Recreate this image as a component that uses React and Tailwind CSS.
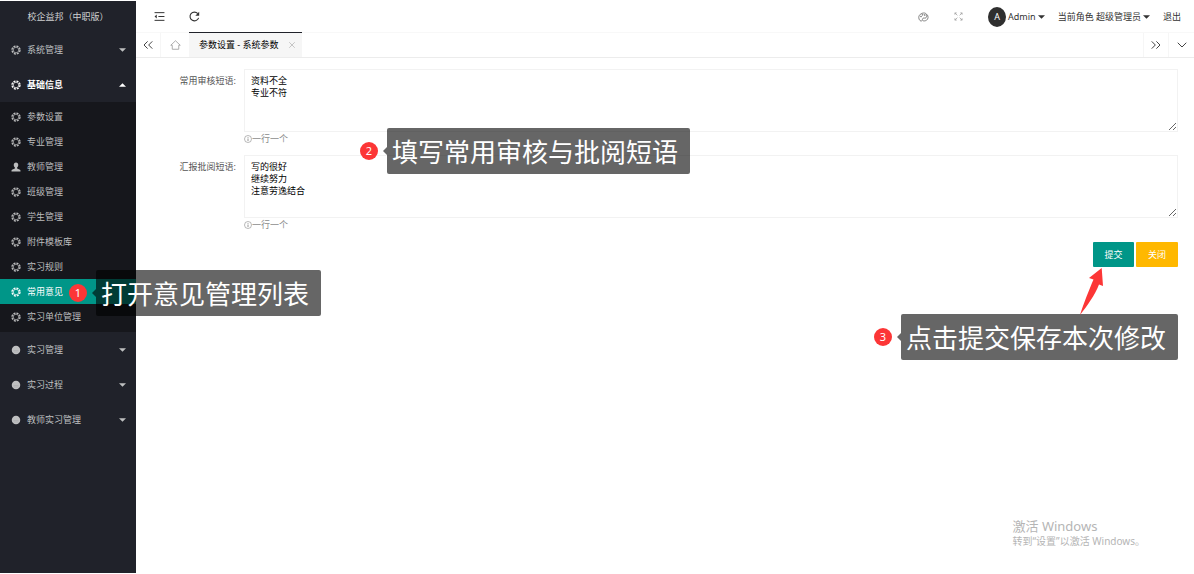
import { useState } from 'react'
import { ChevronDown, ChevronsLeft, ChevronsRight, X } from 'lucide-react'

const GearIcon = () => (
    <svg viewBox="0 0 20 20" className="w-[10px] h-[10px] shrink-0" fill="none" stroke="currentColor">
        <circle cx="10" cy="10" r="8" strokeWidth="2.6" strokeDasharray="4.2 2.08" />
        <circle cx="10" cy="10" r="5.6" strokeWidth="1.5" />
    </svg>
)

const UserIcon = () => (
    <svg viewBox="0 0 20 20" className="w-[10px] h-[10px] shrink-0" fill="currentColor">
        <path d="M10 1C7 1 5.500 3.200 5.500 6c0 2.200 1 4 2.300 5v2L2 15.500C1.200 16 1 17 1 19h18c0-2-.2-3-1-3.500L12.200 13v-2c1.300-1 2.300-2.800 2.300-5C14.500 3.200 13 1 10 1z" />
    </svg>
)

const DotIcon = () => (
    <svg viewBox="0 0 20 20" className="w-[10px] h-[10px] shrink-0">
        <circle cx="10" cy="10" r="8.5" fill="currentColor" />
        <path d="M5 11h10M5 14h10" stroke="#a5a6a8" strokeWidth="1" />
    </svg>
)

const Caret = ({ up }) => (
    <svg viewBox="0 0 8 4" className="w-[7px] h-[4px] shrink-0" fill="currentColor">
        <path d={up ? 'M0 4h8L4 0z' : 'M0 0h8L4 4z'} />
    </svg>
)

const MenuIcon = () => (
    <svg viewBox="0 0 20 20" className="w-[11px] h-[11px]" fill="none" stroke="currentColor" strokeWidth="1.8">
        <path d="M1 3h18M8 10h11M1 17h18" />
        <path d="M5 6.500v7L1 10z" fill="currentColor" stroke="none" />
    </svg>
)

const RefreshIcon = () => (
    <svg viewBox="0 0 20 20" className="w-[11px] h-[11px]" fill="none" stroke="currentColor" strokeWidth="2">
        <path d="M17.500 12.500A8 8 0 1 1 16 4.800" />
        <path d="M18.500 1.500v7h-7z" fill="currentColor" stroke="none" />
    </svg>
)

const HomeIcon = () => (
    <svg viewBox="0 0 22 20" className="w-[11px] h-[10px]" fill="none" stroke="currentColor" strokeWidth="1.6">
        <path d="M4.500 10.500H1.500L11 1.500l9.500 9h-3V18.500h-13z" />
    </svg>
)

const ThemeIcon = () => (
    <svg viewBox="0 0 22 20" className="w-[11px] h-[10px]" fill="none" stroke="currentColor" strokeWidth="1.6">
        <path d="M15 2.500C10 .5 1.500 4 1.500 11c0 5 4 8 6 7 2.500-1.200 0-4 2.500-5.500s4 1 6-1S18 4 15 2.500z" />
        <path d="M18 5c3 3 3 9-1 11.500-2.500 1.500-5 1.500-7 1" />
        <circle cx="6" cy="9" r="1" />
        <circle cx="9" cy="5.500" r="1" />
        <circle cx="13.500" cy="6" r="1" />
    </svg>
)

const FullscreenIcon = () => (
    <svg viewBox="0 0 20 20" className="w-[9px] h-[9px]" fill="none" stroke="currentColor" strokeWidth="1.6">
        <path d="M2 6V2h4M14 2h4v4M18 14v4h-4M6 18H2v-4M2 2l5.500 5.500M18 2l-5.500 5.500M2 18l5.500-5.500M18 18l-5.500-5.500" />
    </svg>
)

const HintIcon = () => (
    <svg viewBox="0 0 16 16" className="w-[8px] h-[8px] shrink-0" fill="none" stroke="currentColor" strokeWidth="1.2">
        <circle cx="8" cy="8" r="7" />
        <path d="M8 4v1.500M8 7v5" strokeWidth="1.8" />
    </svg>
)

const subMenu = [
    { name: '参数设置', icon: GearIcon },
    { name: '专业管理', icon: GearIcon },
    { name: '教师管理', icon: UserIcon },
    { name: '班级管理', icon: GearIcon },
    { name: '学生管理', icon: GearIcon },
    { name: '附件模板库', icon: GearIcon },
    { name: '实习规则', icon: GearIcon },
    { name: '常用意见', icon: GearIcon, active: true },
    { name: '实习单位管理', icon: GearIcon },
]

const NavGroup = ({ name, icon: Icon, open }) => (
    <button
        type="button"
        aria-expanded={Boolean(open)}
        className={`w-full h-[35px] pl-[11px] pr-[10px] flex items-center gap-[6px] ${open ? 'text-white font-bold' : 'text-[#bfc0c1]'}`}
    >
        <Icon />
        <span className="flex-1 text-left">{name}</span>
        <Caret up={open} />
    </button>
)

const Sidebar = () => (
    <nav className="w-[136px] shrink-0 bg-[#20222a]">
        <div className="h-[31px] flex items-center justify-center text-[#cfd0d1]">校企益邦（中职版）</div>
        <NavGroup name="系统管理" icon={GearIcon} />
        <NavGroup name="基础信息" icon={GearIcon} open />
        <ul className="h-[230px] py-[3px] flex flex-col bg-[#16171c]">
            {subMenu.map(({ name, icon: Icon, active }) => (
                <li key={name} className="flex-1 flex">
                    <a
                        href="#"
                        className={`flex-1 pl-[11px] flex items-center gap-[6px] ${active ? 'bg-[#009688] text-white' : 'text-[#bcbdbe]'}`}
                    >
                        <Icon />
                        {name}
                    </a>
                </li>
            ))}
        </ul>
        <NavGroup name="实习管理" icon={DotIcon} />
        <NavGroup name="实习过程" icon={DotIcon} />
        <NavGroup name="教师实习管理" icon={DotIcon} />
    </nav>
)

const Header = () => (
    <header className="h-[31px] pl-[6px] pr-[13px] flex items-center justify-between text-[#333]">
        <div className="flex">
            <button type="button" aria-label="侧边伸缩" className="w-[35px] flex justify-center"><MenuIcon /></button>
            <button type="button" aria-label="刷新" className="w-[35px] flex justify-center"><RefreshIcon /></button>
        </div>
        <div className="flex items-center">
            <button type="button" aria-label="主题" className="w-[35px] flex justify-center text-[#666]"><ThemeIcon /></button>
            <button type="button" aria-label="全屏" className="w-[35px] flex justify-center text-[#999]"><FullscreenIcon /></button>
            <button type="button" className="ml-3 flex items-center gap-[2px]">
                <span className="w-[18px] h-[20px] rounded-[50%] bg-[#2f2f2f] text-white flex items-center justify-center">A</span>
                <span>Admin</span>
                <Caret />
            </button>
            <button type="button" className="ml-[13px] flex items-center gap-[2px]">
                当前角色 超级管理员
                <Caret />
            </button>
            <a href="#" className="ml-[13px]">退出</a>
        </div>
    </header>
)

const TabBar = () => (
    <div className="h-[26px] flex border-y border-t-[#f8f8f8] border-b-[#ececec] text-[#444]">
        <button type="button" aria-label="向左" className="w-[25px] flex items-center justify-center border-r border-[#f6f6f6]">
            <ChevronsLeft size={16} strokeWidth={1.500} />
        </button>
        <button type="button" aria-label="首页" className="w-[28px] flex items-center justify-center text-[#999]">
            <HomeIcon />
        </button>
        <div className="-mt-px h-[25px] border-t border-[#20222a] bg-[#f6f6f6] pl-[10px] pr-[5px] flex items-center gap-[8px] text-black">
            <span>参数设置 - 系统参数</span>
            <button type="button" aria-label="关闭标签" className="text-[#bbb]"><X size={10} strokeWidth={2} /></button>
        </div>
        <div className="flex-1"></div>
        <button type="button" aria-label="向右" className="w-[25px] flex items-center justify-center border-l border-[#f6f6f6]">
            <ChevronsRight size={16} strokeWidth={1.500} />
        </button>
        <button type="button" aria-label="更多" className="w-[26px] flex items-center justify-center border-l border-[#f6f6f6]">
            <ChevronDown size={16} strokeWidth={1.500} />
        </button>
    </div>
)

const PhraseField = ({ id, label, value, onChange }) => (
    <div className="flex">
        <label htmlFor={id} className="w-[108px] pt-[6px] pr-[8px] text-right text-[#555]">{label}</label>
        <div className="flex-1">
            <textarea
                id={id}
                value={value}
                onChange={(e) => onChange(e.target.value)}
                className="block w-full h-[63px] px-[6px] py-[5px] border border-[#f2f2f2] text-black outline-none resize"
            />
            <p className="h-[13px] flex items-center text-[#8a8a8a]">
                <HintIcon />
                一行一个
            </p>
        </div>
    </div>
)

const Callout = ({ step, text, place }) => (
    <div className={`absolute flex items-center pointer-events-none ${place}`}>
        <span className="w-[18px] h-[18px] rounded-full bg-[#fc3636] text-white text-[11px] flex items-center justify-center">{step}</span>
        <svg viewBox="0 0 4 8" className="ml-[5px] w-[4px] h-[8px]" fill="#000" fillOpacity="0.6">
            <path d="M4 0v8L0 4z" />
        </svg>
        <span className="h-[46px] pl-[5px] pr-[12px] rounded-[2px] bg-black/60 text-white text-[26px] leading-[48px] whitespace-nowrap">{text}</span>
    </div>
)

const App = () => {
    const [audit, setAudit] = useState('资料不全\n专业不符')
    const [review, setReview] = useState('写的很好\n继续努力\n注意劳逸结合')

    return (
        <div className="relative min-h-screen py-px flex bg-white text-[9px] leading-[12px] font-['Noto_Sans','Noto_Sans_CJK_SC',sans-serif]">
            <Sidebar />
            <div className="flex-1 min-w-0">
                <Header />
                <TabBar />
                <form className="pt-[11px] pr-4" onSubmit={(e) => e.preventDefault()}>
                    <div className="flex flex-col gap-[10px]">
                        <PhraseField id="audit" label="常用审核短语:" value={audit} onChange={setAudit} />
                        <PhraseField id="review" label="汇报批阅短语:" value={review} onChange={setReview} />
                    </div>
                    <div className="mt-[11px] flex justify-end gap-[2px] text-white">
                        <button type="submit" className="w-[41px] h-[25px] rounded-[1px] bg-[#009688]">提交</button>
                        <button type="button" className="w-[42px] h-[25px] rounded-[1px] bg-[#ffb800]">关闭</button>
                    </div>
                </form>
            </div>

            {/* Step hints */}
            <Callout step={1} text="打开意见管理列表" place="left-[69px] top-[270px]" />
            <Callout step={2} text="填写常用审核与批阅短语" place="left-[360px] top-[128px]" />
            <Callout step={3} text="点击提交保存本次修改" place="right-4 top-[314px]" />
            <svg viewBox="0 0 24 48" className="absolute right-[90px] top-[268px] w-[24px] h-[48px] pointer-events-none" fill="#fc3636">
                <path d="M21.700 0L9 10l4.500 1.500C9 22 3.500 36 0 47c7-9 15-20 19-30.500l4 1.500z" />
            </svg>

            {/* Windows activation notice */}
            <div className="absolute right-[49px] bottom-[26px] text-[#b5b5b5] pointer-events-none">
                <p className="text-[13px] leading-[16px]">激活 Windows</p>
                <p className="text-[10px] leading-[14px]">转到“设置”以激活 Windows。</p>
            </div>
        </div>
    )
}

export default App
